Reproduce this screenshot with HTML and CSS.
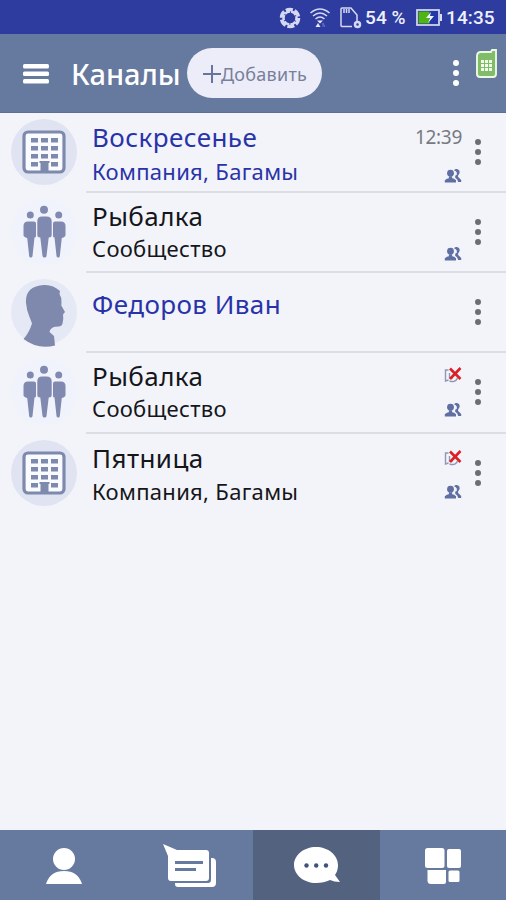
FILE: index.html
```html
<!DOCTYPE html>
<html lang="ru">
<head>
<meta charset="utf-8">
<title>Каналы</title>
<link rel="stylesheet" href="styles.css">
</head>
<body>
<svg class="defs" width="0" height="0" aria-hidden="true">
  <symbol id="building" viewBox="0 0 66 66">
    <circle cx="33" cy="33" r="33" fill="#e0e3f1"/>
    <rect x="13" y="13" width="40" height="40" rx="4" fill="#fafbfe" stroke="#7d89ad" stroke-width="3.200"/>
    <path fill="#7d89ad" d="M20 19h7v4.500h-7zM30 19h7v4.500h-7zM40 19h7v4.500h-7zM20 27h7v4.500h-7zM30 27h7v4.500h-7zM40 27h7v4.500h-7zM20 35h7v4.500h-7zM30 35h7v4.500h-7zM40 35h7v4.500h-7zM20 43h7v4.500h-7zM40 43h7v4.500h-7zM28.500 42h10v2h-1v9h-8v-9h-1z"/>
  </symbol>
  <symbol id="group" viewBox="0 0 66 66">
    <circle cx="33" cy="33" r="33" fill="#f0f3fc"/>
    <g fill="#8089af">
      <circle cx="33" cy="10.700" r="4"/><circle cx="19.300" cy="16" r="3.500"/><circle cx="47.700" cy="16" r="3.500"/>
      <path d="M31 17.500h4.500q5.200 0 5.200 5V36q0 2.500-3 2.500L35.500 57q-.2 1.500-2 1.500T31.500 57l-2.200-18.500q-3 0-3-2.500V22.500q0-5 4.700-5z"/>
      <path d="M17 22.500h6q2 0 2 2V37q0 1.500-1.500 1.500L21.500 57q-.2 1.500-1.700 1.500T18.200 57l-2-18q-3.700-1-3.700-3v-9q0-4.500 4.500-4.500z"/>
      <path d="M50 22.500h-6q-2 0-2 2V37q0 1.500 1.500 1.500L45.500 57q.2 1.500 1.700 1.500T48.800 57l2-18q3.700-1 3.700-3v-9q0-4.500-4.500-4.500z"/>
    </g>
  </symbol>
  <symbol id="man" viewBox="0 0 66 68">
    <circle cx="33" cy="33" r="33" fill="#e5e9f5"/>
    <path fill="#7f88ad" d="M33 6q9-.5 16 6l-.5 3q2 3 2 8l-.2 3.500L54 33l-2 2.500.3 4-.6 4Q51.500 47 48 47.500l-4 .3Q39 49 38.500 53l4.500 4 1 9.500q-17 4.500-31.500-6.500 5.500-6 8.500-15.500-1-3-2.500-6.500-3-7-3.500-14Q14 7 33 6z"/>
  </symbol>
  <symbol id="people" viewBox="0 0 17 14">
    <g fill="#5f6fa3"><circle cx="6" cy="4.200" r="3.400"/><path d="M.3 13.500v-2.200q2.200-2 4-2l.2-2h3l.2 2q2.200 0 3.800 2v2.200z"/>
    <path d="M9.500 1.200q2-2 4.200-.7Q16 2 14.700 4.800L13.400 7l.3 1 3 3v2h-3l-1-2.600-2-1.700V6.800l1.600-1V3.600q-.6-1.800-2.800-2.400z"/></g>
  </symbol>
  <symbol id="muted" viewBox="0 0 17 16">
    <path d="M4 3H1v11l3-1M5 6v5h3M5 14q6 2 8-3" fill="none" stroke="#8d98b5" stroke-width="1.400"/>
    <path d="M5.500 1.500l10.500 10.500M16 1L5.500 12" stroke="#dc2028" stroke-width="2.600"/>
  </symbol>
  <symbol id="dots" viewBox="0 0 8 28">
    <circle cx="4" cy="4" r="3"/><circle cx="4" cy="14" r="3"/><circle cx="4" cy="24" r="3"/>
  </symbol>
</svg>

<div class="status">
  <svg class="s-sync" width="24" height="22" viewBox="0 0 24 22" fill="none" stroke="#d5d9f2"><circle cx="12" cy="11" r="8.500" stroke-width="3.500" stroke-dasharray="7 1.900"/><circle cx="12" cy="11" r="6.500" stroke-width="2.500" stroke-dasharray="5.800 1" stroke-dashoffset="3"/></svg>
  <svg class="s-wifi" width="22" height="22" viewBox="0 0 22 22" fill="none" stroke="#d5d9f2" stroke-width="1.500"><path d="M1.500 6q9.500-8 19 0M4 9q7-6 14 0M6.500 12q4.500-4 9 0"/><path d="M8 13.500h6l-3 3zM6.500 20l2.500-4 2.500 4z" fill="#e7eafb" stroke="none"/><path d="M14 20v-4l2 4" stroke="#6a75c5" stroke-width="1"/></svg>
  <svg class="s-sim" width="22" height="22" viewBox="0 0 22 22" fill="none" stroke="#d5d9f2" stroke-width="1.500"><path d="M12 19.500H2q-1 0-1-1V2q0-1 1-1h9l6 7v6M4 2v4M6.500 2v4M9 2v4"/><circle cx="17.500" cy="17.500" r="2.500" stroke-width="2.500"/></svg>
  <span class="pct">54 %</span>
  <svg class="s-bat" width="27" height="18" viewBox="0 0 27 18"><rect x="1" y="1" width="22" height="15" fill="#2537a6" stroke="#d8dcf0" stroke-width="1.700"/><path d="M2.500 2.500h11v12h-11z" fill="#4fb514"/><path d="M24 5h2v7h-2z" fill="#d8dcf0"/><path d="M15 3l-5 6h4l-2 5 6-7h-4z" fill="#f0f6ff"/></svg>
  <span class="clock">14:35</span>
</div>

<header class="bar">
  <svg class="menu" width="26" height="20" viewBox="0 0 26 20" fill="#fff"><rect width="26" height="4.500" rx="1.500"/><rect y="7.500" width="26" height="4.500" rx="1.500"/><rect y="15" width="26" height="4.500" rx="1.500"/></svg>
  <h1>Каналы</h1>
  <button class="add"><svg width="18" height="18" viewBox="0 0 18 18" stroke="#66759b" stroke-width="2"><path d="M9 0v18M0 9h18"/></svg><span>Добавить</span></button>
  <svg class="more" width="8" height="28"><use href="#dots"/></svg>
  <svg class="phone" width="22" height="29" viewBox="0 0 22 29"><path d="M5 3h10l1-2h4v24q0 3-3 3H4q-3 0-3-3V7q0-4 4-4z" fill="#7fbd68" stroke="#edf8e5" stroke-width="1.900"/><path fill="#f3faea" d="M5 11h3v3H5zM9 11h3v3H9zM13 11h3v3h-3zM5 15h3v3H5zM9 15h3v3H9zM13 15h3v3h-3zM5 19h3v3H5zM9 19h3v3H9zM13 19h3v3h-3z"/></svg>
</header>

<main>
  <div class="row unread first">
    <svg class="avatar" width="66" height="66"><use href="#building"/></svg>
    <div class="text"><div class="name">Воскресенье</div><div class="sub">Компания, Багамы</div></div>
    <div class="meta"><span class="time">12:39</span><svg width="18" height="14"><use href="#people"/></svg></div>
    <svg class="dots" width="8" height="28"><use href="#dots"/></svg>
  </div>
  <div class="row second">
    <svg class="avatar" width="66" height="66"><use href="#group"/></svg>
    <div class="text"><div class="name">Рыбалка</div><div class="sub">Сообщество</div></div>
    <div class="meta"><svg width="18" height="14"><use href="#people"/></svg></div>
    <svg class="dots" width="8" height="28"><use href="#dots"/></svg>
  </div>
  <div class="row unread single">
    <svg class="avatar" width="66" height="68"><use href="#man"/></svg>
    <div class="text"><div class="name">Федоров Иван</div></div>
    <div class="meta"></div>
    <svg class="dots" width="8" height="28"><use href="#dots"/></svg>
  </div>
  <div class="row fourth">
    <svg class="avatar" width="66" height="66"><use href="#group"/></svg>
    <div class="text"><div class="name">Рыбалка</div><div class="sub">Сообщество</div></div>
    <div class="meta"><svg width="18" height="16"><use href="#muted"/></svg><svg width="18" height="14"><use href="#people"/></svg></div>
    <svg class="dots" width="8" height="28"><use href="#dots"/></svg>
  </div>
  <div class="row last">
    <svg class="avatar" width="66" height="66"><use href="#building"/></svg>
    <div class="text"><div class="name">Пятница</div><div class="sub">Компания, Багамы</div></div>
    <div class="meta"><svg width="18" height="16"><use href="#muted"/></svg><svg width="18" height="14"><use href="#people"/></svg></div>
    <svg class="dots" width="8" height="28"><use href="#dots"/></svg>
  </div>
</main>

<nav>
  <a class="tab"><svg width="36" height="38" viewBox="0 0 36 38" fill="#fff"><circle cx="18" cy="12" r="11"/><path d="M0 37q4-13 18-13t18 13z"/></svg></a>
  <a class="tab"><svg width="54" height="44" viewBox="0 0 54 44"><path d="M48 14h1q4 0 4 4v21q0 4-4 4H15q-3 0-3-3v-1h33q3 0 3-3z" fill="#fff"/><path d="M0 0l14 6h29q3 0 3 3v25q0 3-3 3H8q-3 0-3-3V12z" fill="#fff"/><path d="M12 18.500h28M12 25.500h21" stroke="#66799f" stroke-width="3"/></svg></a>
  <a class="tab active"><svg width="46" height="37" viewBox="0 0 46 37"><path d="M22 0c12 0 22 8 22 18 0 4-1 7-3 10l5 7q-6 0-10-2-6 3-14 3C10 36 0 28 0 18S10 0 22 0z" fill="#fff"/><g fill="#40517a"><circle cx="12.500" cy="18.500" r="2.200"/><circle cx="22.200" cy="18.500" r="2.200"/><circle cx="32" cy="18.500" r="2.200"/></g></svg></a>
  <a class="tab"><svg width="36" height="36" viewBox="0 0 36 36" fill="#fff"><rect width="19.500" height="20" rx="2.500"/><rect x="22" y="1" width="14" height="19" rx="2"/><path d="M2.500 22H21v12q0 2-2 2H6q-3.500 0-3.500-3.500z"/><rect x="23.500" y="22.500" width="11" height="11.500" rx="1.500"/></svg></a>
</nav>
</body>
</html>
```
FILE: styles.css
```css
* { box-sizing: border-box; }
body {
  margin: 0;
  width: 506px;
  height: 900px;
  display: flex;
  flex-direction: column;
  background: #f3f4f9;
  font-family: "Noto Sans", "Open Sans", sans-serif;
  overflow: hidden;
}
svg { display: block; flex: none; }
.defs { position: absolute; }

.status {
  height: 34px;
  flex: none;
  background: #2e3b9f;
  color: #edf0ff;
  display: flex;
  align-items: center;
  padding: 2px 0 0 278px;
  font: 500 19px/32px Roboto, sans-serif;
  letter-spacing: 0.1px;
  white-space: nowrap;
}
.s-wifi { margin-left: 7px; }
.s-sim { margin-left: 9px; }
.pct { width: 42px; margin-left: 3px; }
.s-bat { margin-left: 9px; }
.clock { margin-left: 3px; }

.bar {
  height: 79px;
  flex: none;
  background: #66799f;
  border-bottom: 1px solid #5d6f99;
  display: flex;
  align-items: center;
  padding-left: 23px;
}
.menu { margin-top: 1px; }
h1 {
  margin: 2px 0 0 22px;
  width: 116px;
  color: #fff;
  font-size: 29px;
  font-weight: 500;
  line-height: 40px;
}
.add {
  width: 135px;
  height: 50px;
  border: 0;
  border-radius: 25px;
  background: #ecedf9;
  color: #78809a;
  display: flex;
  align-items: center;
  padding: 2px 0 0 16px;
  font: 18px/30px "Noto Sans", sans-serif;
  letter-spacing: 0.25px;
}
.more { margin-left: 130px; fill: #fff; }
.phone { margin: 0 0 20px 16px; }

main { flex: 1; }
.row {
  height: 80px;
  display: grid;
  grid-template-columns: 86px 1fr 60px 44px;
  color: #15161b;
  background: linear-gradient(#dcdee4, #dcdee4) 86px 100% / 420px 2px no-repeat;
}
.unread { color: #2933a9; }
.avatar { margin: 6px 0 0 11px; }
.text { padding: 8px 0 0 6px; white-space: nowrap; }
.name { font-size: 26px; line-height: 30px; letter-spacing: 0.43px; }
.sub { font-size: 22px; line-height: 34px; letter-spacing: 0.3px; }
.meta {
  display: flex;
  flex-direction: column;
  align-items: flex-end;
  justify-content: flex-end;
  padding-bottom: 10px;
}
.time { font-size: 19px; line-height: 24px; color: #777a80; margin-bottom: 20px; letter-spacing: -0.3px; }
.meta svg + svg { margin-top: 20px; }
.dots { margin: 25px 0 0 12px; fill: #6d6e74; }
.first .text { padding-top: 9px; }
.first .sub { line-height: 38px; }
.second .meta { padding-bottom: 12px; }
.single .text { padding-top: 16px; }
.fourth { height: 81px; }
.fourth .text { padding-top: 8px; }
.fourth .meta { padding-bottom: 17px; }
.last { height: 82px; background: none; }
.last .text { padding-top: 9px; }
.last .sub { line-height: 37px; }
.last .meta { padding-bottom: 17px; }
.last .meta svg + svg { margin-top: 19px; }

nav {
  height: 70px;
  flex: none;
  display: grid;
  grid-template-columns: repeat(4, 1fr);
  background: #66799f;
}
.tab { display: flex; align-items: center; justify-content: center; padding: 1px 0 0 1px; }
.active { background: #53637f; }
```
